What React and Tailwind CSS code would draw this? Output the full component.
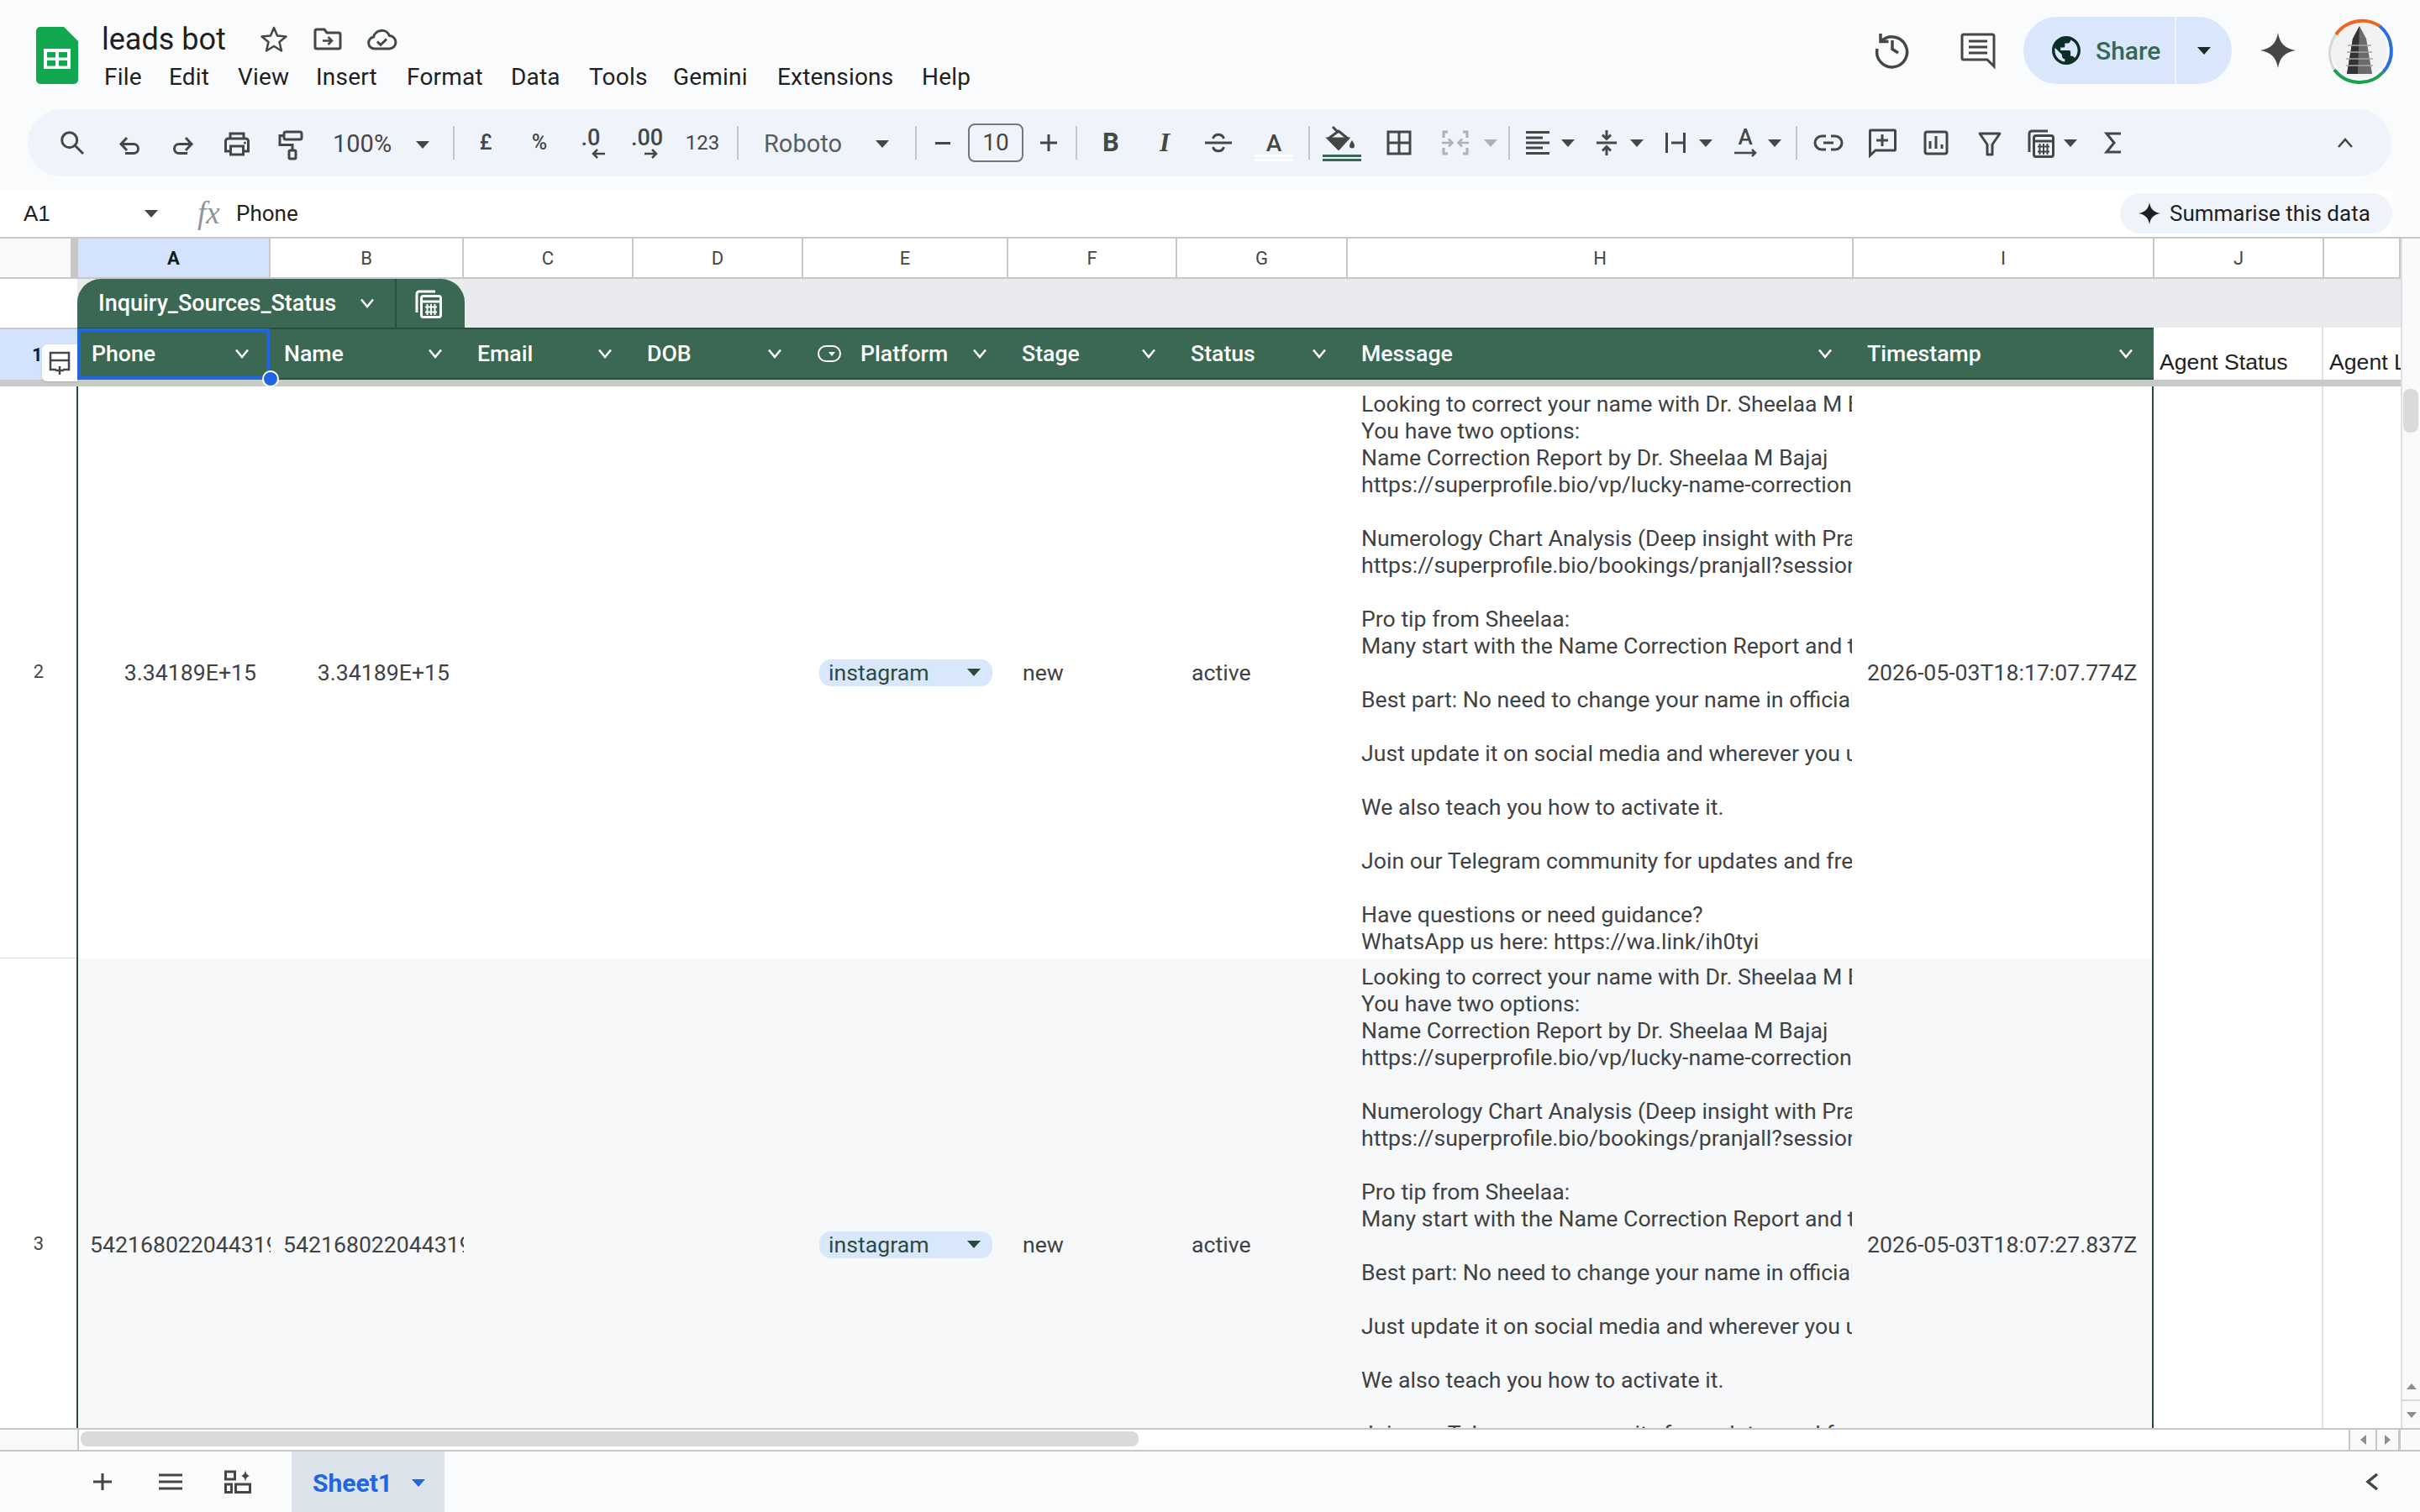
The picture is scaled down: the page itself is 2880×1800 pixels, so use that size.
import React from "react";

const MESSAGE = [
  "Looking to correct your name with Dr. Sheelaa M Bajaj?",
  "You have two options:",
  "Name Correction Report by Dr. Sheelaa M Bajaj",
  "https://superprofile.bio/vp/lucky-name-correction",
  "",
  "Numerology Chart Analysis (Deep insight with Pranjall)",
  "https://superprofile.bio/bookings/pranjall?session=numerology",
  "",
  "Pro tip from Sheelaa:",
  "Many start with the Name Correction Report and then go deeper.",
  "",
  "Best part: No need to change your name in official documents.",
  "",
  "Just update it on social media and wherever you use it.",
  "",
  "We also teach you how to activate it.",
  "",
  "Join our Telegram community for updates and free tips.",
  "",
  "Have questions or need guidance?",
  "WhatsApp us here: https://wa.link/ih0tyi",
];

const MENU = [
  ["File", "w-[77px]"],
  ["Edit", "w-[82px]"],
  ["View", "w-[93px]"],
  ["Insert", "w-[108px]"],
  ["Format", "w-[124px]"],
  ["Data", "w-[93px]"],
  ["Tools", "w-[100px]"],
  ["Gemini", "w-[124px]"],
  ["Extensions", "w-[172px]"],
  ["Help", "w-[70px]"],
];

const COLUMNS = [
  ["A", "w-[229px]"],
  ["B", "w-[230px]"],
  ["C", "w-[202px]"],
  ["D", "w-[202px]"],
  ["E", "w-[244px]"],
  ["F", "w-[201px]"],
  ["G", "w-[203px]"],
  ["H", "w-[602px]"],
  ["I", "w-[358px]"],
  ["J", "w-[202px]"],
  ["", "w-[91px]"],
];

const HEADERS = [
  ["Phone", "w-[229px]"],
  ["Name", "w-[230px]"],
  ["Email", "w-[202px]"],
  ["DOB", "w-[202px]"],
  ["Platform", "w-[244px]"],
  ["Stage", "w-[201px]"],
  ["Status", "w-[203px]"],
  ["Message", "w-[602px]"],
  ["Timestamp", "w-[358px]"],
];

const Ico = ({ w = 36, h = 36, sw = 3, className = "", children }) => (
  <svg
    width={w}
    height={h}
    viewBox={`0 0 ${w} ${h}`}
    fill="none"
    stroke="currentColor"
    strokeWidth={sw}
    className={`overflow-visible shrink-0 ${className}`}
  >
    {children}
  </svg>
);

const Caret = ({ className = "text-[#444746]" }) => (
  <svg width="16" height="9" viewBox="0 0 16 9" className={`shrink-0 ${className}`}>
    <path d="M0 0H16L8 9Z" fill="currentColor" />
  </svg>
);

const Chevron = () => (
  <svg width="18" height="12" viewBox="0 0 18 12" fill="none" stroke="white" strokeWidth="2.5" className="shrink-0">
    <path d="M2 1.5L9 10L16 1.5" />
  </svg>
);

const Sparkle = ({ size = 40, className = "" }) => (
  <svg width={size} height={size} viewBox="0 0 40 40" className={`shrink-0 ${className}`}>
    <path d="M20 0C22 12 28 18 40 20C28 22 22 28 20 40C18 28 12 22 0 20C12 18 18 12 20 0Z" fill="currentColor" />
  </svg>
);

const Sep = ({ className = "" }) => <div className={`w-[2px] h-[40px] bg-[#c7c7c7] shrink-0 ${className}`} />;

const Btn = ({ w = "w-[64px]", children, className = "" }) => (
  <div className={`${w} h-[36px] flex items-center justify-center shrink-0 ${className}`}>{children}</div>
);

// icon + caret pairs sit at their own spacing, not centred
const Group = ({ w, children, className = "" }) => (
  <div className={`${w} h-[36px] flex items-center shrink-0 ${className}`}>{children}</div>
);

const CalcIcon = ({ className = "" }) => (
  <Ico w={36} h={36} className={className}>
    <path d="M4 29V7a3 3 0 0 1 3-3H26" />
    <rect x="9.5" y="9.5" width="23" height="25" rx="2.5" />
    <path d="M9.5 16H32.5" />
    <path d="M14 22.5H28M14 28.5H28M16.5 19V32M21 19V32M25.5 19V32" strokeWidth="2" />
  </Ico>
);

const SheetsLogo = () => (
  <svg width="50" height="68" viewBox="0 0 50 68" className="shrink-0">
    <path d="M5 0H33L50 17V63a5 5 0 0 1-5 5H5a5 5 0 0 1-5-5V5a5 5 0 0 1 5-5Z" fill="#0fa84e" />
    <rect x="9" y="26" width="32" height="24" fill="white" />
    <rect x="13" y="30" width="10" height="6.5" fill="#0fa84e" />
    <rect x="27" y="30" width="10" height="6.5" fill="#0fa84e" />
    <rect x="13" y="40" width="10" height="6.5" fill="#0fa84e" />
    <rect x="27" y="40" width="10" height="6.5" fill="#0fa84e" />
  </svg>
);

const Avatar = () => (
  <svg width="84" height="84" viewBox="0 0 84 84" fill="none" className="shrink-0">
    <circle cx="42" cy="42" r="33" fill="#f1f2f3" />
    <path d="M42 13L50 28L57 70H27L34 28Z" fill="#6b6b6b" />
    <path d="M42 13L34 28L27 70H40Z" fill="#333333" />
    <path d="M28 36H56M27 44H57M26 52H58M26 60H58" stroke="#a8a8a8" strokeWidth="1.5" />
    <path d="M12 65A38 38 0 0 1 14 23" stroke="#d5d7d9" strokeWidth="3" />
    <path d="M14 23A38 38 0 0 1 66 13" stroke="#f0641e" strokeWidth="4" />
    <path d="M66 13A38 38 0 0 1 70 68" stroke="#2a6fe0" strokeWidth="4" />
    <path d="M70 68A38 38 0 0 1 12 65" stroke="#1aa14f" strokeWidth="4" />
  </svg>
);

const TopBar = () => (
  <div className="h-[130px] flex shrink-0">
    <div className="pl-[43px] pt-[32px] w-[125px] shrink-0">
      <SheetsLogo />
    </div>
    <div className="flex flex-col flex-1">
      <div className="flex items-center h-[44px] mt-[25px]">
        <span className="text-[36px] leading-[44px] text-[#1f1f1f] w-[187px] -ml-[4px]">leads bot</span>
        <Ico sw={2.5} className="text-[#444746]">
          <path d="M18 4L22 13.5L32.5 14.5L24.5 21L27 31.5L18 26L9 31.5L11.5 21L3.5 14.5L14 13.5Z" strokeLinejoin="round" />
        </Ico>
        <Ico className="ml-[28px] text-[#444746]">
          <path d="M3 8a2 2 0 0 1 2-2h9l3 4H31a2 2 0 0 1 2 2V27a2 2 0 0 1-2 2H5a2 2 0 0 1-2-2Z" />
          <path d="M12 19.5H23M18.5 15l4.5 4.5-4.5 4.5" strokeWidth="2.5" />
        </Ico>
        <Ico className="ml-[28px] text-[#444746]">
          <path d="M9.5 29a7 7 0 0 1-1-13.9a10 10 0 0 1 19-1.5a7.5 7.5 0 0 1-.5 15.4Z" />
          <path d="M13 20.5l4 4 7-7" />
        </Ico>
      </div>
      <div className="flex items-center mt-[3px] h-[40px] -ml-[1px] text-[28px] tracking-[0.2px] text-[#1f1f1f]">
        {MENU.map(([label, w]) => (
          <span key={label} className={w}>
            {label}
          </span>
        ))}
      </div>
    </div>
    <div className="flex items-center pr-[30px] h-[120px] text-[#444746]">
      <Ico w={42} h={42} sw={3.5} className="-mt-[4px]">
        <path d="M8 12A18 18 0 1 1 3 21" />
        <path d="M7 3V12.5H16.5" />
        <path d="M21 11V21.5L28 26" />
      </Ico>
      <Ico w={42} h={42} className="ml-[60px] -mt-[2px]">
        <path d="M2 5a2 2 0 0 1 2-2H38a2 2 0 0 1 2 2V41L32 33H4a2 2 0 0 1-2-2Z" />
        <path d="M10 11H32M10 18H32M10 25H32" />
      </Ico>
      <div className="ml-[33px] w-[248px] h-[80px] rounded-full bg-[#d9e6fb] flex items-center">
        <svg width="34" height="34" viewBox="2 2 20 20" className="ml-[34px] shrink-0">
          <path
            fill="#0b2f26"
            d="M12 2C6.48 2 2 6.48 2 12s4.48 10 10 10 10-4.48 10-10S17.52 2 12 2zm-1 17.93c-3.95-.49-7-3.85-7-7.93 0-.62.08-1.21.21-1.79L9 15v1c0 1.1.9 2 2 2v1.93zm6.9-2.54c-.26-.81-1-1.39-1.9-1.39h-1v-3c0-.55-.45-1-1-1H8v-2h2c.55 0 1-.45 1-1V7h2c1.1 0 2-.9 2-2v-.41c2.93 1.19 5 4.06 5 7.41 0 2.08-.8 3.97-2.1 5.39z"
          />
        </svg>
        <span className="ml-[18px] text-[30px] font-medium text-[#356854] w-[94px]">Share</span>
        <div className="w-[2px] h-[80px] bg-[#f0f5fd]" />
        <Caret className="ml-[25px] text-[#1f2a28]" />
      </div>
      <Sparkle size={42} className="ml-[34px] text-[#444746]" />
      <div className="ml-[34px]">
        <Avatar />
      </div>
    </div>
  </div>
);

const Toolbar = () => (
  <div className="h-[96px] shrink-0">
    <div className="ml-[33px] w-[2813px] h-[80px] rounded-full bg-[#eff3fa] flex items-center pl-[21px] text-[#444746]">
      <Btn>
        <Ico>
          <circle cx="14.7" cy="14.7" r="9" />
          <path d="M21 21L31 31" />
        </Ico>
      </Btn>
      <Btn className="ml-[4px]">
        <Ico>
          <path d="M15 12L8 19.5L15 27M8 19.5H23a5.5 5.5 0 0 1 0 11H13" />
        </Ico>
      </Btn>
      <Btn>
        <Ico>
          <path d="M21 12L28 19.5L21 27M28 19.5H13a5.5 5.5 0 0 0 0 11H23" />
        </Ico>
      </Btn>
      <Btn>
        <Ico>
          <path d="M10 13V7H26V13M10 28H4.5V16a3 3 0 0 1 3-3H28.5a3 3 0 0 1 3 3V28H26" />
          <rect x="10.5" y="22" width="15" height="10" />
          <circle cx="27.5" cy="18" r="1.5" fill="currentColor" stroke="none" />
        </Ico>
      </Btn>
      <Btn>
        <Ico>
          <rect x="10" y="5" width="21" height="9" rx="2" />
          <path d="M10 9.5H5V20.5H20V27" />
          <rect x="16" y="27" width="8" height="10" rx="1.5" />
        </Ico>
      </Btn>
      <div className="w-[161px] flex items-center shrink-0 pl-[18px] text-[29px] pt-[4px]">
        <span className="w-[99px]">100%</span>
        <Caret />
      </div>
      <Sep />
      <div className="w-[5px] shrink-0" />
      <Btn className="text-[25px] font-medium">£</Btn>
      <Btn className="text-[25px] font-medium">%</Btn>
      <Btn>
        <div className="flex flex-col items-center -ml-[2px]">
          <span className="text-[27px] leading-[24px] font-medium -ml-[4px]">.0</span>
          <Ico w={16} h={12} sw={2.5} className="ml-[14px] mt-[1px]">
            <path d="M16 6H2M7 1L2 6L7 11" />
          </Ico>
        </div>
      </Btn>
      <Btn>
        <div className="flex flex-col items-center">
          <span className="text-[27px] leading-[24px] font-medium">.00</span>
          <Ico w={16} h={12} sw={2.5} className="ml-[10px] mt-[1px]">
            <path d="M0 6H14M9 1L14 6L9 11" />
          </Ico>
        </div>
      </Btn>
      <Btn className="text-[24px] ml-[2px]">123</Btn>
      <Sep className="ml-[9px]" />
      <div className="w-[210px] flex items-center shrink-0 pl-[30px] pt-[3px] text-[29px] text-[#5a5d5e]">
        <span className="w-[133px]">Roboto</span>
        <Caret />
      </div>
      <Sep />
      <Btn w="w-[61px]">
        <div className="w-[18px] h-[3px] bg-[#444746]" />
      </Btn>
      <div className="w-[66px] h-[46px] rounded-[8px] border-2 border-[#747775] flex items-center justify-center text-[28px] shrink-0">
        10
      </div>
      <Btn w="w-[58px]" className="pl-[2px]">
        <Ico w={22} h={22}>
          <path d="M11 1V21M1 11H21" />
        </Ico>
      </Btn>
      <Sep className="ml-[4px]" />
      <Btn className="ml-[8px] text-[31px] font-bold">B</Btn>
      <Btn className="text-[31px] font-bold italic font-['Liberation_Serif',serif]">I</Btn>
      <Btn>
        <Ico>
          <path d="M2 18H34M11.5 13a6.8 6.8 0 0 1 13 0M11.5 23a6.8 6.8 0 0 0 13 0" />
        </Ico>
      </Btn>
      <Btn w="w-[68px]">
        <div className="flex flex-col items-center pt-[8px]">
          <span className="text-[28px] leading-[28px] font-medium">A</span>
          <div className="w-[46px] h-[3px] bg-white mt-[-1px]" />
          <div className="w-[46px] h-[3px] bg-white mt-[2px]" />
        </div>
      </Btn>
      <Sep className="ml-[7px]" />
      <Btn className="ml-[6px]">
        <div className="flex flex-col items-center pt-[2px]">
          <Ico w={36} h={29}>
            <path d="M7 1L14 8" />
            <path d="M2 15L14 6L25 15L14 27Z" strokeLinejoin="round" />
            <path d="M2 15H25L14 27Z" fill="currentColor" />
            <path d="M30 17c-2 3-3 5-3 6.5a3 3 0 0 0 6 0c0-1.5-1-3.5-3-6.5Z" fill="currentColor" stroke="none" />
          </Ico>
          <div className="w-[46px] h-[3px] bg-[#356854] mt-[5px]" />
          <div className="w-[46px] h-[3px] bg-[#356854] mt-[2px]" />
        </div>
      </Btn>
      <Btn className="ml-[4px]">
        <Ico>
          <rect x="5" y="5" width="26" height="26" />
          <path d="M18 5V31M5 18H31" />
        </Ico>
      </Btn>
      <Group w="w-[90px]" className="ml-[3px] pl-[14px] text-[#aeb1b4]">
        <Ico>
          <path d="M9 5H4V12M27 5H32V12M9 31H4V24M27 31H32V24" />
          <path d="M2 18H14M10 13.5L14.5 18L10 22.5M34 18H22M26 13.5L21.5 18L26 22.5" strokeWidth="2.5" />
        </Ico>
        <Caret className="ml-[16px] text-[#aeb1b4]" />
      </Group>
      <Sep className="ml-[5px]" />
      <Group w="w-[78px]" className="ml-[5px] pl-[14px]">
        <Ico w={28} h={28}>
          <path d="M0 1.5H28M0 8H20M0 14H28M0 20H20M0 26.5H28" />
        </Ico>
        <Caret className="ml-[14px]" />
      </Group>
      <Group w="w-[82px]" className="pl-[20px]">
        <Ico w={24} h={32}>
          <path d="M0 16H24" />
          <path d="M12 1V11M7 6.5L12 11.5L17 6.5M12 31V21M7 25.5L12 20.5L17 25.5" />
        </Ico>
        <Caret className="ml-[16px]" />
      </Group>
      <Group w="w-[82px]" className="pl-[20px]">
        <Ico w={24} h={24}>
          <path d="M1.5 0V24M22.5 0V24M7 12H21" />
        </Ico>
        <Caret className="ml-[16px]" />
      </Group>
      <Group w="w-[84px]" className="pl-[19px]">
        <div className="flex flex-col items-center w-[28px]">
          <span className="text-[26px] leading-[21px] font-medium">A</span>
          <Ico w={26} h={10} sw={2.5} className="mt-[3px]">
            <path d="M0 5H24M21 1L25 5L21 9" />
          </Ico>
        </div>
        <Caret className="ml-[13px]" />
      </Group>
      <Sep className="ml-[9px]" />
      <Btn className="ml-[5px]">
        <Ico>
          <path d="M15 10H10a8 8 0 0 0 0 16h5M21 10h5a8 8 0 0 1 0 16h-5M12 18H24" />
        </Ico>
      </Btn>
      <Btn>
        <Ico>
          <path d="M3.5 4a1 1 0 0 1 1-1H32.500a1 1 0 0 1 1 1V26a1 1 0 0 1-1 1H10L3.500 33Z" />
          <path d="M18 8V22M11 15H25" />
        </Ico>
      </Btn>
      <Btn>
        <Ico>
          <rect x="5" y="5" width="26" height="26" rx="2.500" />
          <path d="M11 16V25M18 10V25M25 20V25" />
        </Ico>
      </Btn>
      <Btn>
        <Ico>
          <path d="M6 7H30L21 20V32H15V20Z" strokeLinejoin="round" />
        </Ico>
      </Btn>
      <Group w="w-[82px]" className="pl-[11px]">
        <CalcIcon />
        <Caret className="ml-[9px]" />
      </Group>
      <Btn className="pl-[2px]">
        <Ico>
          <path d="M27 7H10L19 18L10 29H27" />
        </Ico>
      </Btn>
      <div className="flex-1" />
      <Ico w={20} h={12} sw={2.5} className="mr-[45px]">
        <path d="M2 11L10 2L18 11" />
      </Ico>
    </div>
  </div>
);

const FormulaBar = () => (
  <div className="h-[56px] shrink-0">
    <div className="w-[2847px] h-full bg-white flex items-center font-['Liberation_Sans',sans-serif] text-[26px] text-[#1f1f1f]">
      <span className="pl-[28px] w-[172px] shrink-0">A1</span>
      <Caret />
      <span className="ml-[47px] w-[46px] text-[37px] italic text-[#8f9499] font-['Liberation_Serif',serif] shrink-0">fx</span>
      <span className="flex-1 font-['Roboto',sans-serif]">Phone</span>
      <div className="h-[48px] w-[324px] rounded-full bg-[#eff3fa] flex items-center pl-[22px] font-['Roboto',sans-serif] text-[26px]">
        <Sparkle size={26} className="text-[#1f1f1f]" />
        <span className="ml-[11px]">Summarise this data</span>
      </div>
    </div>
  </div>
);

const TextCell = ({ w, right, className = "", children }) => (
  <div className={`${w} h-full flex items-center shrink-0 overflow-hidden whitespace-nowrap ${right ? "justify-end pr-[17px]" : ""} ${className}`}>
    {children}
  </div>
);

const DataRow = ({ num, phone, name, time, zebra, pt }) => (
  <div className="flex h-[681px] shrink-0 text-[26.67px] leading-[32px] text-[#3f4244]">
    <div className="w-[92px] shrink-0 bg-white flex items-center justify-center text-[22px] text-[#444746] border-b border-[#e0e0e0]">{num}</div>
    <div className={`flex shrink-0 border-l-2 border-r-2 border-[#234f3e] -ml-[1px] ${zebra}`}>
      {phone}
      {name}
      <div className="w-[202px] shrink-0" />
      <div className="w-[202px] shrink-0" />
      <div className="w-[244px] shrink-0 flex items-center pl-[19px]">
        <div className="w-[206px] h-[32px] rounded-[14px] bg-[#d9e7fd] flex items-center justify-between pl-[11px] pr-[14px] text-[#2f4a40]">
          instagram
          <Caret className="text-[#2a4a3e]" />
        </div>
      </div>
      <div className="w-[201px] shrink-0 flex items-center pl-[17px]">new</div>
      <div className="w-[203px] shrink-0 flex items-center pl-[17px]">active</div>
      <div className={`w-[600px] shrink-0 h-full overflow-hidden whitespace-nowrap pl-[16px] ${pt}`}>
        {MESSAGE.map((line, i) => (
          <div key={i} className="h-[32px] overflow-hidden">
            {line}
          </div>
        ))}
      </div>
      <div className="w-[357px] shrink-0 flex items-center pl-[18px]">{time}</div>
    </div>
    <div className="w-[202px] shrink-0 border-r-2 border-[#e2e3e3] bg-white" />
    <div className="w-[92px] shrink-0 bg-white" />
  </div>
);

const Sheet = () => (
  <div className="flex-1 flex min-h-0 border-t-2 border-[#c7c7c7]">
    <div className="w-[2857px] shrink-0 flex flex-col min-h-0">
      <div className="flex h-[48px] shrink-0 border-b-2 border-[#c7c7c7] text-[22px] text-[#444746]">
        <div className="w-[93px] bg-[#f8f9fa] border-r-[9px] border-[#c7c7c7] shrink-0" />
        {COLUMNS.map(([label, w]) => (
          <div
            key={w + label}
            className={`${w} shrink-0 flex items-center justify-center border-r-2 border-[#c7c7c7] ${label === "A" ? "bg-[#d3e3fd] font-bold text-[#0b1f17]" : "bg-white"}`}
          >
            {label}
          </div>
        ))}
      </div>
      <div className="flex h-[58px] shrink-0">
        <div className="w-[92px] bg-white shrink-0" />
        <div className="flex-1 bg-[#e8eaed]">
          <div className="w-[461px] h-[58px] rounded-t-[28px] bg-[#3a6853] flex items-center text-white text-[27px] font-medium">
            <span className="pl-[25px] w-[336px]">Inquiry_Sources_Status</span>
            <Chevron />
            <div className="ml-[24px] w-[2px] h-full bg-[#2a4f3f]" />
            <CalcIcon className="ml-[20px] text-white" />
          </div>
        </div>
      </div>
      <div className="flex h-[62px] shrink-0 relative">
        <div className="w-[92px] shrink-0 bg-[#d3e3fd] border-t-2 border-[#c7c7c7] flex items-center pl-[38px] text-[22px] font-bold text-[#1f1f1f] relative">
          1
          <div className="absolute left-[50px] top-[18px] w-[42px] h-[44px] rounded-l-[6px] bg-white shadow flex items-center justify-center text-[#444746]">
            <Ico w={26} h={28} sw={2.5}>
              <path d="M9 22H2V2H24V22H17M2 11H24" />
              <path d="M13 18V28M8 23H18" />
            </Ico>
          </div>
        </div>
        <div className="flex shrink-0 bg-[#3a6853] border-t-2 border-b-2 border-[#274f3d] text-white text-[26.67px] font-medium relative">
          {HEADERS.map(([label, w]) => (
            <div key={label} className={`${w} shrink-0 flex items-center justify-between pl-[17px] pr-[24px]`}>
              <span className="flex items-center">
                {label === "Platform" && (
                  <svg width="28" height="20" viewBox="0 0 28 20" fill="none" className="mr-[23px] ml-[1px]">
                    <rect x="1" y="1" width="26" height="18" rx="9" stroke="white" strokeWidth="2" />
                    <path d="M13 8H21L17 13Z" fill="white" />
                  </svg>
                )}
                {label}
              </span>
              <Chevron />
            </div>
          ))}
          <div className="absolute left-0 top-[-1px] w-[229px] h-[61px] border-[4px] border-[#1f66e0]" />
          <div className="absolute left-[220px] top-[49px] w-[20px] h-[20px] rounded-full bg-[#1f66e0] border-2 border-white z-10" />
        </div>
        <div className="w-[202px] shrink-0 bg-white border-r-2 border-[#e2e3e3] flex items-end pl-[7px] pb-[1px] font-['Liberation_Sans',sans-serif] text-[26.67px] text-[#1f1f1f] whitespace-nowrap overflow-hidden">
          Agent Status
        </div>
        <div className="w-[92px] shrink-0 bg-white flex items-end pl-[7px] pb-[1px] font-['Liberation_Sans',sans-serif] text-[26.67px] text-[#1f1f1f] whitespace-nowrap overflow-hidden">
          Agent Last
        </div>
      </div>
      <div className="h-[8px] shrink-0 bg-[#c8cac8]" />
      <div className="flex-1 min-h-0 overflow-hidden flex flex-col">
        <DataRow
          num="2"
          zebra="bg-white"
          pt="pt-[5px]"
          time="2026-05-03T18:17:07.774Z"
          phone={<TextCell w="w-[229px]" right>3.34189E+15</TextCell>}
          name={<TextCell w="w-[230px]" right>3.34189E+15</TextCell>}
        />
        <DataRow
          num="3"
          zebra="bg-[#f6f8f9]"
          pt="pt-[6px]"
          time="2026-05-03T18:07:27.837Z"
          phone={<TextCell w="w-[229px]" className="pl-[14px]">542168022044319</TextCell>}
          name={<TextCell w="w-[230px]" className="pl-[15px]">542168022044319</TextCell>}
        />
      </div>
    </div>
    <div className="flex-1 flex flex-col bg-[#f9fafb] border-l-2 border-[#e0e0e0]">
      <div className="h-[179px] shrink-0" />
      <div className="ml-[1px] w-[18px] h-[52px] rounded-[8px] bg-[#dadada]" />
      <div className="flex-1" />
      <div className="h-[34px] flex items-center justify-center border-b-2 border-[#d9d9d9]">
        <svg width="12" height="7" viewBox="0 0 12 7"><path d="M0 7H12L6 0Z" fill="#8e8e8e" /></svg>
      </div>
      <div className="h-[32px] flex items-center justify-center">
        <svg width="12" height="7" viewBox="0 0 12 7"><path d="M0 0H12L6 7Z" fill="#8e8e8e" /></svg>
      </div>
    </div>
  </div>
);

const HScroll = () => (
  <div className="h-[26px] shrink-0 border-t-2 border-[#c7c7c7] flex bg-white">
    <div className="w-[94px] h-[24px] shrink-0 bg-[#f8f9fa] border-r-2 border-[#c7c7c7]" />
    <div className="flex-1 bg-white h-[24px] pt-[2px] pl-[2px]">
      <div className="w-[1259px] h-[18px] rounded-[8px] bg-[#dadada]" />
    </div>
    <div className="w-[32px] h-[24px] shrink-0 bg-[#f8f9fa] border-l-2 border-[#c7c7c7] flex items-center justify-center">
      <svg width="7" height="12" viewBox="0 0 7 12"><path d="M7 0V12L0 6Z" fill="#8e8e8e" /></svg>
    </div>
    <div className="w-[30px] h-[24px] shrink-0 bg-[#f8f9fa] border-l-2 border-r-[3px] border-[#c7c7c7] flex items-center justify-center">
      <svg width="7" height="12" viewBox="0 0 7 12"><path d="M0 0V12L7 6Z" fill="#8e8e8e" /></svg>
    </div>
    <div className="w-[23px] h-[24px] shrink-0 bg-[#f9fafb]" />
  </div>
);

const BottomBar = () => (
  <div className="h-[74px] shrink-0 border-t-2 border-[#c7c7c7] bg-[#f9fbfd] flex items-stretch text-[#444746]">
    <div className="w-[347px] shrink-0 flex items-center pl-[105px]">
      <Ico w={34} h={34}>
        <path d="M17 7V27M6 17H28" />
      </Ico>
      <Ico w={28} h={20} className="ml-[50px]">
        <path d="M0 2H28M0 10H28M0 18H28" />
      </Ico>
      <Ico w={32} h={28} className="ml-[50px]">
        <rect x="1.500" y="2" width="11" height="9" />
        <path d="M25 0C25.500 4 26.500 5.500 30 7C26.500 8.500 25.500 10 25 14C24.500 10 23.500 8.500 20 7C23.500 5.500 24.500 4 25 0Z" fill="currentColor" stroke="none" />
        <rect x="1.500" y="17" width="7" height="9.500" />
        <rect x="13.500" y="17" width="17" height="9.500" />
      </Ico>
    </div>
    <div className="w-[182px] shrink-0 bg-[#dde3ea] flex items-center pl-[25px] pt-[2px] text-[30px] font-bold text-[#1f66e0]">
      <span className="w-[118px]">Sheet1</span>
      <Caret className="text-[#1f66e0]" />
    </div>
    <div className="flex-1" />
    <div className="flex items-center pr-[49px]">
      <Ico w={16} h={22} sw={3.5}>
        <path d="M14 2L3 11L14 20" />
      </Ico>
    </div>
  </div>
);

export default function App() {
  return (
    <div className="w-screen h-screen overflow-hidden flex flex-col bg-[#f9fbfd] font-['Roboto',sans-serif]">
      <TopBar />
      <Toolbar />
      <FormulaBar />
      <Sheet />
      <HScroll />
      <BottomBar />
    </div>
  );
}
